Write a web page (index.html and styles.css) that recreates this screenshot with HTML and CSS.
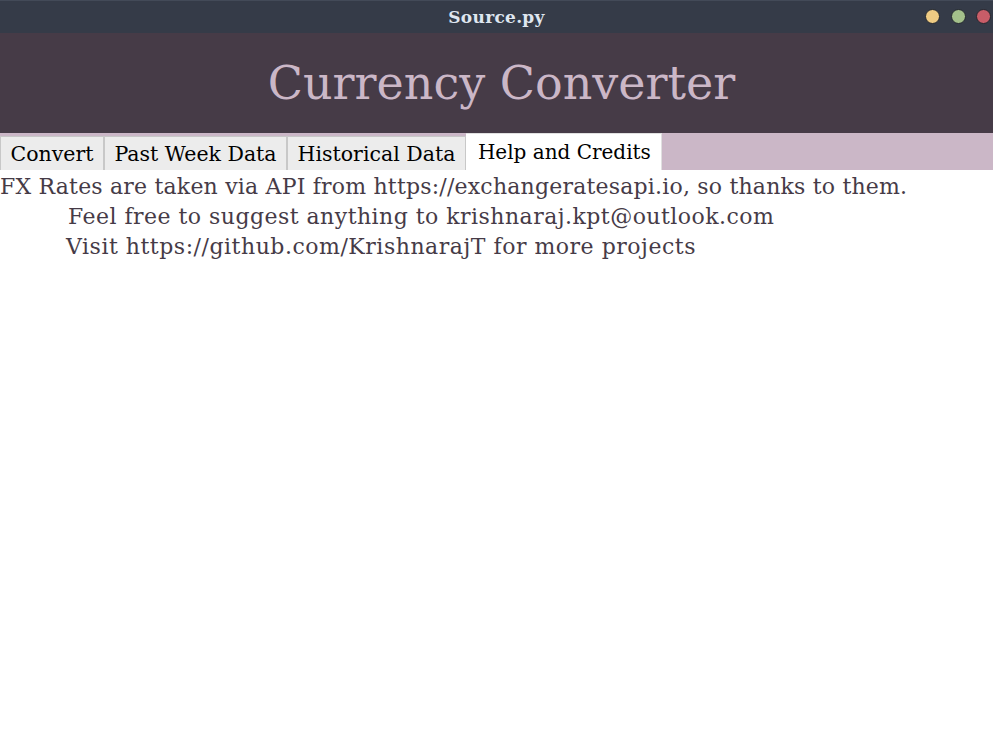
FILE: index.html
```html
<!DOCTYPE html>
<html>
<head>
<meta charset="utf-8">
<link rel="stylesheet" href="styles.css">
</head>
<body>
<div class="window">
  <div class="titlebar">
    <span class="title">Source.py</span>
    <div class="controls">
      <span class="dot dot-yellow"></span>
      <span class="dot dot-green"></span>
      <span class="dot dot-red"></span>
    </div>
  </div>
  <div class="header">Currency Converter</div>
  <div class="tabbar">
    <div class="tab">Convert</div>
    <div class="tab">Past Week Data</div>
    <div class="tab">Historical Data</div>
    <div class="tab active">Help and Credits</div>
  </div>
  <div class="content">
    <div class="line l1">FX Rates are taken via API from https://exchangeratesapi.io, so thanks to them.</div>
    <div class="line l2">Feel free to suggest anything to krishnaraj.kpt@outlook.com</div>
    <div class="line l3">Visit https://github.com/KrishnarajT for more projects</div>
  </div>
</div>
</body>
</html>
```
FILE: styles.css
```css
html, body {
  margin: 0;
  padding: 0;
  background: #ffffff;
}
.window {
  width: 993px;
  height: 731px;
  display: flex;
  flex-direction: column;
  overflow: hidden;
  font-family: "DejaVu Serif", serif;
}
.titlebar {
  height: 33px;
  background: #353b48;
  border-top: 1px solid #434a58;
  box-sizing: border-box;
  display: flex;
  align-items: center;
  justify-content: center;
  position: relative;
}
.title {
  font-family: "DejaVu Serif", serif;
  font-weight: bold;
  font-size: 17px;
  letter-spacing: 0.3px;
  color: #dfe6f0;
}
.controls {
  position: absolute;
  right: 2px;
  top: 8px;
  display: flex;
  gap: 10.5px;
}
.dot {
  width: 15px;
  height: 15px;
  border-radius: 50%;
  border: 1px solid #23272f;
  box-sizing: border-box;
}
.dot-yellow { background: #efcb83; }
.dot-green { background: #a3c08b; }
.dot-red { background: #c85d68; }
.header {
  height: 100px;
  background: #463b47;
  color: #cbb7c7;
  font-size: 46px;
  padding-left: 10px;
  display: flex;
  align-items: center;
  justify-content: center;
}
.tabbar {
  height: 37px;
  background: #cbb7c7;
  display: flex;
  align-items: flex-end;
}
.tab {
  height: 34px;
  box-sizing: border-box;
  background: #ececec;
  border: 1px solid #c8c8c8;
  border-bottom: none;
  padding: 0 9.5px;
  font-size: 20.5px;
  color: #000;
  display: flex;
  align-items: center;
}
.tab.active {
  height: 37px;
  background: #ffffff;
  border-left: none;
  border-color: #e0e0e0;
  padding: 0 10px 0 12px;
  font-size: 20px;
}
.content {
  color: #463b47;
  font-size: 22px;
  line-height: 30px;
  padding-top: 2px;
}
.l1 { letter-spacing: 0.2px; }
.l2 { padding-left: 68px; letter-spacing: 0.47px; }
.l3 { padding-left: 66px; letter-spacing: 0.52px; }
```
